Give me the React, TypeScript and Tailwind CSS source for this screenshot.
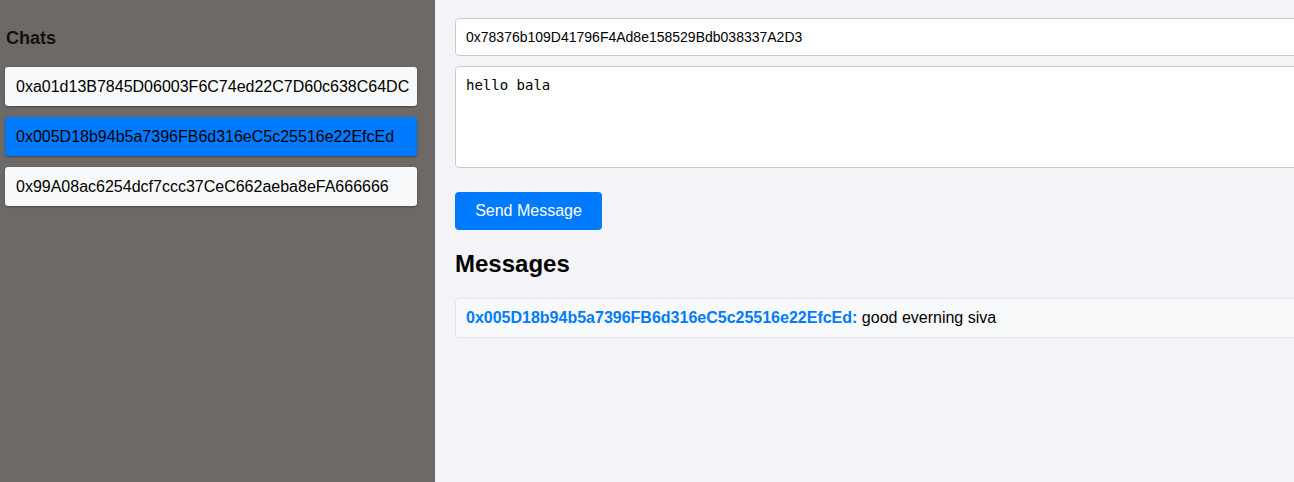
import React, { useState } from "react";

const chats = [
  "0xa01d13B7845D06003F6C74ed22C7D60c638C64DC",
  "0x005D18b94b5a7396FB6d316eC5c25516e22EfcEd",
  "0x99A08ac6254dcf7ccc37CeC662aeba8eFA666666",
];

export default function App() {
  const [selected, setSelected] = useState(1);
  const [receiver, setReceiver] = useState(
    "0x78376b109D41796F4Ad8e158529Bdb038337A2D3"
  );
  const [text, setText] = useState("hello bala");

  return (
    <div className="flex h-[482px] w-[1294px] overflow-hidden font-['Liberation_Sans',Arial,sans-serif] text-black">
      {/* Sidebar */}
      <div className="w-[435px] shrink-0 bg-[#6d6967] pl-[5px] pr-[18px] pt-[27px]">
        <h3 className="mb-[18px] pl-[1px] text-[18px] font-bold leading-[22px] text-[#111]">
          Chats
        </h3>
        <div className="flex flex-col gap-[11px]">
          {chats.map((c, i) => (
            <div
              key={c}
              onClick={() => setSelected(i)}
              className={`h-[39px] cursor-pointer rounded-[3px] px-[11px] text-[16px] leading-[39px] shadow-[0_1px_2px_rgba(0,0,0,0.35)] ${
                i === selected ? "bg-[#007bff]" : "bg-[#f8f9fa]"
              }`}
            >
              {c}
            </div>
          ))}
        </div>
      </div>

      {/* Main */}
      <div className="flex-1 bg-[#f4f4f8] pl-[20px] pt-[18px]">
        <div className="w-[1000px]">
          <input
            value={receiver}
            onChange={(e) => setReceiver(e.target.value)}
            className="block h-[38px] w-full rounded-[4px] border border-[#cccccc] bg-white px-[10px] text-[14px] outline-none"
          />
          <textarea
            value={text}
            onChange={(e) => setText(e.target.value)}
            className="mt-[10px] block h-[102px] w-full resize-none rounded-[4px] border border-[#cccccc] bg-white px-[10px] py-[10px] font-['DejaVu_Sans_Mono',monospace] text-[14px] leading-[17px] outline-none"
          />
          <button className="mt-[24px] block h-[38px] w-[147px] rounded-[4px] bg-[#007bff] text-[16px] text-white">
            Send Message
          </button>
          <h2 className="mt-[20px] text-[24px] font-bold leading-[28px]">
            Messages
          </h2>
          <div className="mt-[20px] h-[40px] rounded-[4px] border border-[#e6e6ea] bg-[#f8f9fa] px-[10px] text-[16px] leading-[38px]">
            <span className="font-bold text-[#007bff]">
              0x005D18b94b5a7396FB6d316eC5c25516e22EfcEd:
            </span>{" "}
            good everning siva
          </div>
        </div>
      </div>
    </div>
  );
}
